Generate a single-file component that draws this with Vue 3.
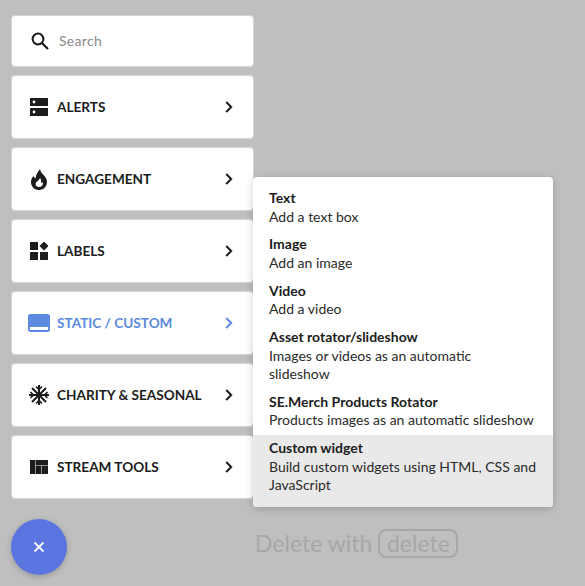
<template>
  <div class="page">
    <div class="sidebar">
      <div class="card search">
        <svg class="search-icon" viewBox="0 0 18 18" width="18" height="18">
          <circle cx="7" cy="7" r="5.4" fill="none" stroke="#1a1a1a" stroke-width="2" />
          <path d="M11 11l6 6" fill="none" stroke="#1a1a1a" stroke-width="2.2" />
        </svg>
        <span class="placeholder">Search</span>
      </div>

      <div
        v-for="item in categories"
        :key="item.label"
        class="card category"
        :class="{ active: item.active }"
      >
        <span class="cat-icon">
          <svg v-if="item.icon === 'alerts'" viewBox="0 0 18 18" width="18" height="18">
            <path fill-rule="evenodd" d="M0 0h18v8H0zM4 2.6a1.4 1.4 0 1 0 0 2.8a1.4 1.4 0 0 0 0-2.8zM0 10h18v8H0zM4 12.6a1.4 1.4 0 1 0 0 2.8a1.4 1.4 0 0 0 0-2.8z" />
          </svg>
          <svg v-else-if="item.icon === 'flame'" viewBox="0 0 16 21" width="16" height="21">
            <path fill-rule="evenodd" d="M9 0C9.500 3 11 4.500 12.500 6C14.500 8 16 10.500 16 13C16 17.500 12.500 21 8 21C3.500 21 0 17.500 0 13C0 10.500 1 8.500 2.500 7C3 8 3.500 8.700 4.500 9.500C5 5 7 3 9 0ZM9 9C8.500 10.500 7 11.500 5.500 13C4 14.500 4.300 18 8 18C11.500 18 12.500 15 11.500 13C11.200 13.500 10.800 14 10 14C10.500 12 10.200 10 9 9Z" />
          </svg>
          <svg v-else-if="item.icon === 'labels'" viewBox="0 0 18 18" width="18" height="18">
            <path d="M0 0h8v8H0zM0 10h8v8H0zM10 10h8v8h-8zM14 -0.500l4.500 4.500l-4.500 4.500l-4.500-4.500z" />
          </svg>
          <svg v-else-if="item.icon === 'static'" class="wide" viewBox="0 0 22 18" width="22" height="18">
            <path fill-rule="evenodd" d="M2.500 0h17A2.500 2.500 0 0 1 22 2.500v13a2.500 2.500 0 0 1-2.500 2.500h-17A2.500 2.500 0 0 1 0 15.500v-13A2.500 2.500 0 0 1 2.500 0zM2 13v3h18v-3z" />
          </svg>
          <svg v-else-if="item.icon === 'snow'" class="wide" viewBox="0 0 20 20" width="20" height="20">
            <g fill="none" stroke="currentColor" stroke-width="2">
              <path d="M10 0v20M0 10h20M3 3l14 14M17 3L3 17" />
              <path d="M7 1.500l3 3l3-3M7 18.500l3-3l3 3M1.500 7l3 3l-3 3M18.500 7l-3 3l3 3" stroke-width="1.600" />
            </g>
          </svg>
          <svg v-else viewBox="0 0 18 14" width="18" height="14">
            <path d="M0 0h5v14H0zM5.500 0H18v5.200H5.500zM5.500 5.700h6v8.300h-6zM12 5.700h6V14h-6z" />
          </svg>
        </span>
        <span class="cat-label">{{ item.label }}</span>
        <svg class="chevron" viewBox="0 0 8 12" width="8" height="12">
          <path d="M1.200 1l5 5l-5 5" fill="none" stroke="currentColor" stroke-width="2" />
        </svg>
      </div>

      <button class="fab">
        <svg viewBox="0 0 12 12" width="12" height="12">
          <path d="M1.500 1.500l9 9M10.500 1.500l-9 9" fill="none" stroke="#fff" stroke-width="1.800" />
        </svg>
      </button>
    </div>

    <div class="side">
      <div class="menu">
        <div
          v-for="entry in widgets"
          :key="entry.title"
          class="menu-item"
          :class="{ hovered: entry.hovered }"
        >
          <div class="menu-title">{{ entry.title }}</div>
          <div class="menu-desc">{{ entry.desc }}</div>
        </div>
      </div>
      <div class="delete-hint">
        <span>Delete with</span>
        <span class="key">delete</span>
      </div>
    </div>
  </div>
</template>

<script setup>
const categories = [
  { label: 'ALERTS', icon: 'alerts' },
  { label: 'ENGAGEMENT', icon: 'flame' },
  { label: 'LABELS', icon: 'labels' },
  { label: 'STATIC / CUSTOM', icon: 'static', active: true },
  { label: 'CHARITY & SEASONAL', icon: 'snow' },
  { label: 'STREAM TOOLS', icon: 'tools' }
]

const widgets = [
  { title: 'Text', desc: 'Add a text box' },
  { title: 'Image', desc: 'Add an image' },
  { title: 'Video', desc: 'Add a video' },
  { title: 'Asset rotator/slideshow', desc: 'Images or videos as an automatic\nslideshow' },
  { title: 'SE.Merch Products Rotator', desc: 'Products images as an automatic slideshow' },
  { title: 'Custom widget', desc: 'Build custom widgets using HTML, CSS and JavaScript', hovered: true }
]
</script>

<style>
html,
body {
  margin: 0;
  background: #bfbfbf;
}
</style>

<style scoped>
.page {
  display: flex;
  align-items: flex-start;
  width: 585px;
  height: 586px;
  box-sizing: border-box;
  padding: 15px 0 0 11px;
  overflow: hidden;
  background: #bfbfbf;
  font-family: Lato, "Open Sans", sans-serif;
}

.sidebar {
  display: flex;
  flex-direction: column;
  gap: 8px;
  width: 243px;
  flex: none;
}

.card {
  display: flex;
  align-items: center;
  box-sizing: border-box;
  background: #fff;
  border: 1px solid #d6d6d6;
  border-radius: 4px;
}

.search {
  height: 52px;
  padding-left: 19px;
}

.search-icon {
  flex: none;
}

.placeholder {
  margin-left: 10px;
  margin-bottom: 2px;
  font-size: 14px;
  letter-spacing: 0.3px;
  color: #8a8a8a;
}

.category {
  height: 64px;
  padding: 0 20px 0 18px;
  color: #1c1c1c;
}

.category.active {
  color: #5c8ade;
}

.cat-icon {
  display: flex;
  align-items: center;
  justify-content: center;
  width: 18px;
  height: 22px;
  flex: none;
  fill: currentColor;
}

.cat-label {
  flex: 1;
  margin-left: 9px;
  font-size: 13.600px;
  font-weight: 700;
  white-space: nowrap;
}

.chevron {
  flex: none;
}

.wide {
  flex: none;
}

.fab {
  display: flex;
  align-items: center;
  justify-content: center;
  width: 56px;
  height: 56px;
  margin-top: 12px;
  padding: 0;
  border: none;
  border-radius: 50%;
  background: #5a75e0;
  box-shadow: 0 2px 6px rgba(0, 0, 0, 0.2);
}

.side {
  display: flex;
  flex-direction: column;
  margin-left: -1px;
  padding-top: 162px;
  flex: none;
}

.menu {
  width: 300px;
  box-sizing: border-box;
  padding-top: 8px;
  background: #fff;
  border-radius: 4px;
  box-shadow: 0 2px 8px rgba(0, 0, 0, 0.2);
  overflow: hidden;
}

.menu-item {
  padding: 4px 16px 5.350px;
  font-size: 14px;
  line-height: 18.500px;
  color: #2a2a2a;
}

.menu-item:last-child {
  padding-bottom: 12.750px;
}

.menu-item.hovered {
  background: #e9e9e9;
}

.menu-title {
  font-weight: 700;
  color: #1c1c1c;
}

.menu-desc {
  white-space: pre-line;
}

.delete-hint {
  display: flex;
  align-items: center;
  gap: 6px;
  margin-top: 22px;
  margin-left: 2px;
  font-size: 23px;
  line-height: 29px;
  color: #a7a7a7;
}

.key {
  box-sizing: border-box;
  width: 80px;
  text-align: center;
  border: 2px solid #a7a7a7;
  border-radius: 8px;
  line-height: 25px;
}
</style>
